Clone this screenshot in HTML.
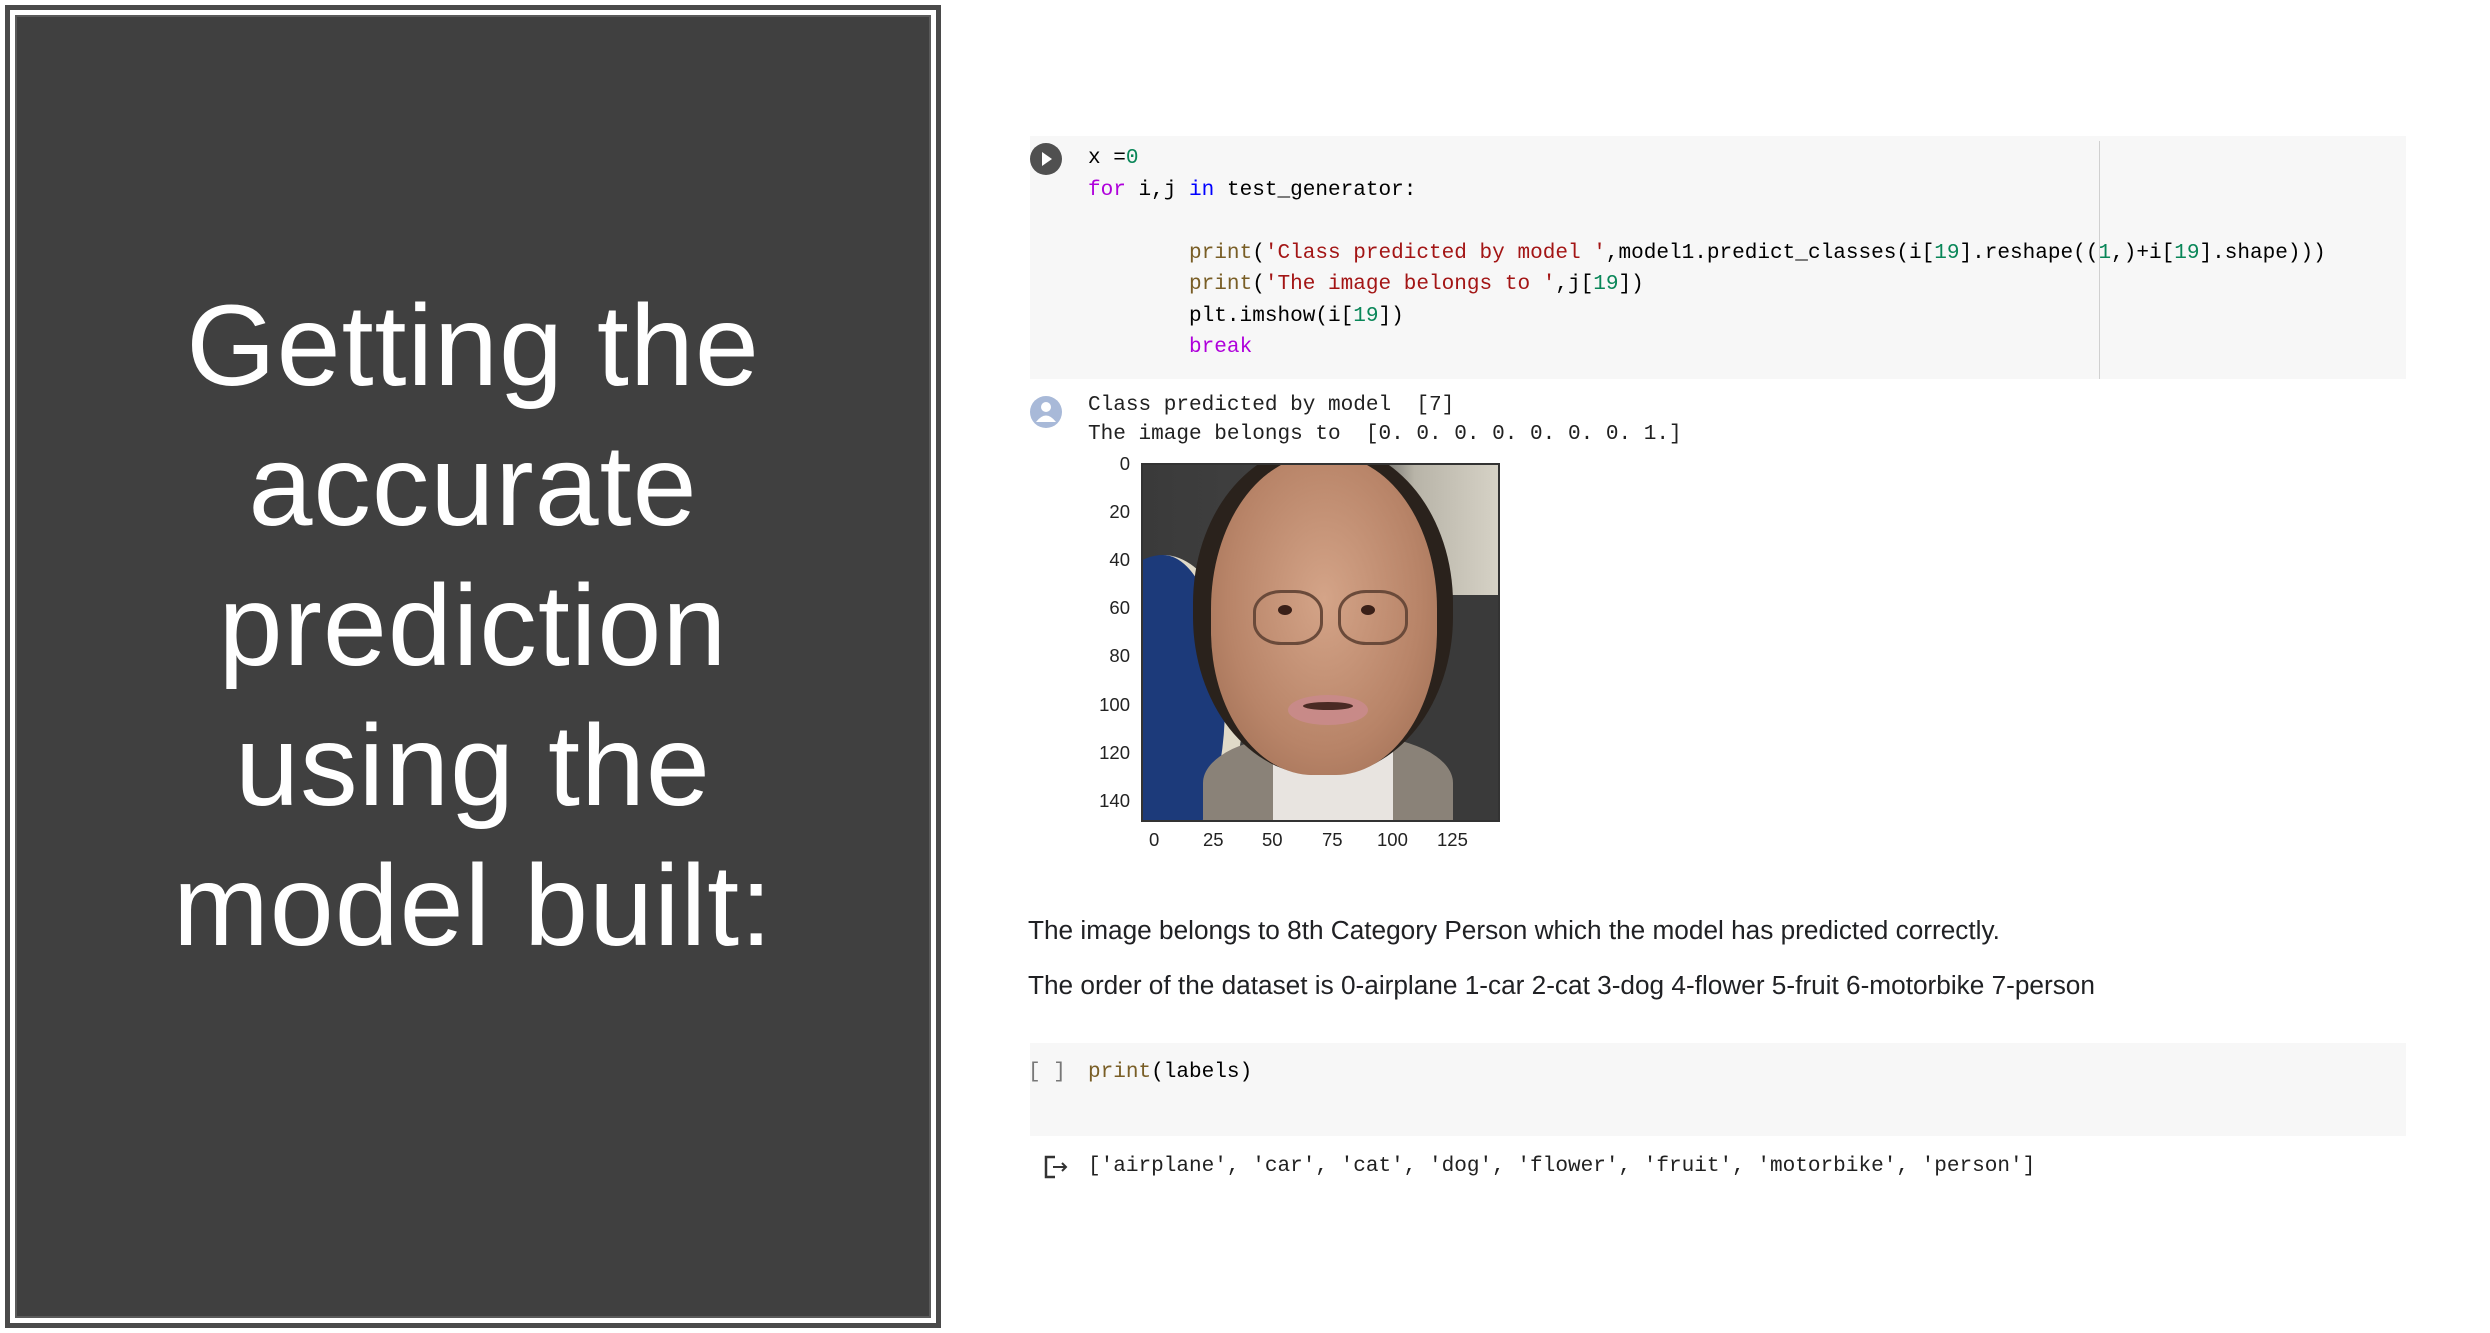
<!DOCTYPE html>
<html><head><meta charset="utf-8"><style>
*{margin:0;padding:0;box-sizing:border-box}
body{width:2490px;height:1333px;background:#fff;position:relative;overflow:hidden;font-family:"Liberation Sans",sans-serif}
.panel{position:absolute;left:5px;top:5px;width:936px;height:1323px;border:5px solid #4a4a4a;background:#fff}
.panel .in{position:absolute;left:5px;top:5px;right:5px;bottom:5px;border:2px solid #5a5a5a;background:#404040}
.title{position:absolute;left:0;width:926px;text-align:center;color:#fff;font-size:115px;line-height:140px;top:266px;letter-spacing:1px}
.a{position:absolute;white-space:pre;font-family:"Liberation Mono",monospace;font-size:21.06px;color:#000}
.cell{position:absolute;background:#f7f7f7;left:1030px;width:1376px}
.k{color:#af00db}.b{color:#0000ff}.s{color:#a31515}.n{color:#098658}.f{color:#795e26}
.p{position:absolute;left:1028px;font-size:26.2px;color:#202124;white-space:pre}
.tk{position:absolute;font-size:18.5px;color:#222;font-family:"Liberation Sans",sans-serif}
</style></head><body>
<div class="panel"><div class="in"></div>
<div class="title">Getting the<br>accurate<br>prediction<br>using the<br>model built:</div></div>

<div class="cell" style="top:136px;height:243px"></div>
<div style="position:absolute;left:2099px;top:141px;width:1px;height:238px;background:#d0d0d0"></div>
<svg style="position:absolute;left:1029px;top:142px" width="34" height="34"><circle cx="17" cy="17" r="16" fill="#505050"/><path d="M13 10 L23 17 L13 24Z" fill="#fff"/></svg>
<div class="a" style="left:1088px;top:143px;line-height:31.5px">x =<span class="n">0</span>
<span class="k">for</span> i,j <span class="b">in</span> test_generator:

        <span class="f">print</span>(<span class="s">'Class predicted by model '</span>,model1.predict_classes(i[<span class="n">19</span>].reshape((<span class="n">1</span>,)+i[<span class="n">19</span>].shape)))
        <span class="f">print</span>(<span class="s">'The image belongs to '</span>,j[<span class="n">19</span>])
        plt.imshow(i[<span class="n">19</span>])
        <span class="k">break</span></div>

<svg style="position:absolute;left:1029px;top:395px" width="34" height="34"><circle cx="17" cy="17" r="16" fill="#a8b9d8"/><circle cx="17" cy="12" r="5" fill="#fff"/><path d="M7 27 Q17 14 27 27Z" fill="#fff"/></svg>
<div class="a" style="left:1088px;top:391px;line-height:29px;color:#212121">Class predicted by model  [7]
The image belongs to  [0. 0. 0. 0. 0. 0. 0. 1.]</div>

<div style="position:absolute;left:1141px;top:463px;width:359px;height:359px;border:2px solid #333;overflow:hidden;background:#3c3c3c">
 <div style="position:absolute;left:0;top:0;width:362px;height:362px;background:linear-gradient(90deg,#3a3a3a 0%,#444 60%,#b8b4a8 75%,#d8d4c8 100%)"></div>
 <div style="position:absolute;left:230px;top:130px;width:140px;height:240px;background:#3a3a3a"></div>
 <div style="position:absolute;left:-60px;top:90px;width:160px;height:300px;border-radius:50%;background:#1c3a7a;border-right:18px solid #e0dac8"></div>
 <div style="position:absolute;left:60px;top:270px;width:250px;height:120px;background:#8a8278;border-radius:40% 40% 0 0"></div>
 <div style="position:absolute;left:130px;top:270px;width:120px;height:100px;background:#e8e4e0"></div>
 <div style="position:absolute;left:50px;top:-20px;width:260px;height:330px;border-radius:48%;background:#2a221c"></div>
 <div style="position:absolute;left:68px;top:-10px;width:226px;height:320px;border-radius:48% 48% 45% 45%;background:radial-gradient(ellipse at 50% 45%,#d4a488 0%,#b88468 60%,#9a6a50 100%)"></div>
 <div style="position:absolute;left:110px;top:125px;width:70px;height:55px;border:3px solid #6a4a3a;border-radius:40%"></div>
 <div style="position:absolute;left:195px;top:125px;width:70px;height:55px;border:3px solid #6a4a3a;border-radius:40%"></div>
 <div style="position:absolute;left:135px;top:140px;width:14px;height:10px;border-radius:50%;background:#3a2018"></div>
 <div style="position:absolute;left:218px;top:140px;width:14px;height:10px;border-radius:50%;background:#3a2018"></div>
 <div style="position:absolute;left:145px;top:230px;width:80px;height:30px;border-radius:50%;background:#c88a88"></div>
 <div style="position:absolute;left:160px;top:237px;width:50px;height:8px;border-radius:50%;background:#4a2a24"></div>
</div>
<div class="tk" style="left:1106px;top:453px;width:24px;text-align:right">0</div>
<div class="tk" style="left:1086px;top:501px;width:44px;text-align:right">20</div>
<div class="tk" style="left:1086px;top:549px;width:44px;text-align:right">40</div>
<div class="tk" style="left:1086px;top:597px;width:44px;text-align:right">60</div>
<div class="tk" style="left:1086px;top:645px;width:44px;text-align:right">80</div>
<div class="tk" style="left:1076px;top:694px;width:54px;text-align:right">100</div>
<div class="tk" style="left:1076px;top:742px;width:54px;text-align:right">120</div>
<div class="tk" style="left:1076px;top:790px;width:54px;text-align:right">140</div>
<div class="tk" style="left:1149px;top:829px">0</div>
<div class="tk" style="left:1203px;top:829px">25</div>
<div class="tk" style="left:1262px;top:829px">50</div>
<div class="tk" style="left:1322px;top:829px">75</div>
<div class="tk" style="left:1377px;top:829px">100</div>
<div class="tk" style="left:1437px;top:829px">125</div>

<div class="p" style="top:915px">The image belongs to 8th Category Person which the model has predicted correctly.</div>
<div class="p" style="top:970px">The order of the dataset is 0-airplane 1-car 2-cat 3-dog 4-flower 5-fruit 6-motorbike 7-person</div>

<div class="cell" style="top:1043px;height:93px"></div>
<div class="a" style="left:1028px;top:1060px;color:#777">[ ]</div>
<div class="a" style="left:1088px;top:1060px"><span class="f">print</span>(labels)</div>
<svg style="position:absolute;left:1043px;top:1154px" width="28" height="26"><path d="M12 3H3V23H12" fill="none" stroke="#333" stroke-width="2.5"/><path d="M10 13H23M19 9L23 13L19 17" fill="none" stroke="#333" stroke-width="2"/></svg>
<div class="a" style="left:1088px;top:1154px;color:#212121">['airplane', 'car', 'cat', 'dog', 'flower', 'fruit', 'motorbike', 'person']</div>
</body></html>
